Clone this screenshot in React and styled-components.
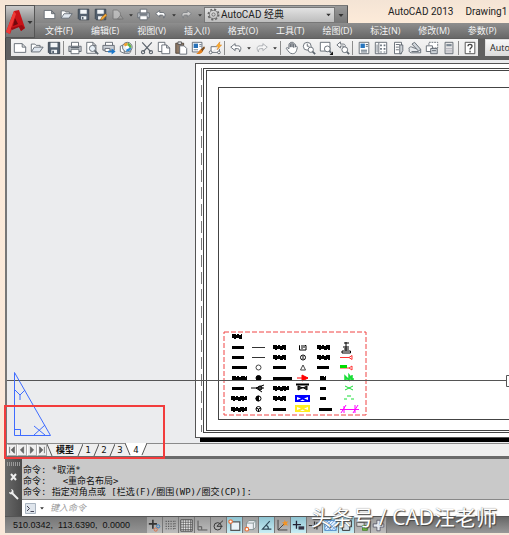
import React, { useState } from "react";
import styled, { createGlobalStyle, css } from "styled-components";

const ui = `"Open Sans", "Noto Sans CJK SC", sans-serif`;
const mono = `"DejaVu Sans Mono", "Noto Sans CJK SC", monospace`;

const GlobalStyle = createGlobalStyle`
  * {
    box-sizing: border-box;
  }
  body {
    margin: 0;
    background: #fbeadb;
    font-family: ${ui};
    overflow: hidden;
  }
  button, select, input {
    margin: 0;
    padding: 0;
    border: 0;
    background: none;
    font: inherit;
    color: inherit;
    border-radius: 0;
  }
`;

const Window = styled.div`
  position: relative;
  display: flex;
  flex-direction: column;
  padding: 5px 0 2px 5px;
  background: linear-gradient(#f4e4d5, #fdebd9 24px, #f9e8da);
`;

const Header = styled.header`
  display: flex;
`;

const AppButton = styled.button`
  flex: none;
  width: 30px;
  border: 1px solid #555;
  background: linear-gradient(#c9c9c9, #8b8b8b 50%, #777);
  display: flex;
  align-items: center;
`;

const HeaderRows = styled.div`
  flex: 1;
  min-width: 0;
`;

const TitleRow = styled.div`
  height: 18px;
  display: flex;
  align-items: center;
`;

const QuickAccess = styled.div`
  flex: none;
  height: 18px;
  display: flex;
  align-items: center;
  padding-left: 6px;
  background: linear-gradient(#a5a5a5, #858585);
  border-top: 1px solid #777;
`;

const IconButton = styled.button`
  flex: none;
  width: ${(props) => (props.$narrow ? "9px" : "17px")};
  height: 17px;
  display: flex;
  align-items: center;
  justify-content: center;
  opacity: ${(props) => (props.$dim ? 0.5 : 1)};
`;

const Workspace = styled.label`
  display: flex;
  align-items: center;
  gap: 1px;
  width: 131px;
  height: 16px;
  padding: 0 2px;
  color: #222;
  font-family: Roboto, "Noto Sans CJK SC", sans-serif;
  font-size: 10px;
  border: 1px solid #777;
  background: linear-gradient(#e2e2e2, #bdbdbd);

  select {
    flex: 1;
    appearance: none;
    height: 14px;
    line-height: 14px;
    outline: none;
  }
`;

const MoreButton = styled.button`
  width: 13px;
  height: 17px;
  display: flex;
  align-items: center;
  justify-content: center;
  background: linear-gradient(#999, #777);
  border-right: 1px solid #555;
`;

const WindowTitle = styled.h1`
  margin: 0;
  padding: 0 0 4px 40px;
  display: flex;
  gap: 12px;
  font-family: Roboto, sans-serif;
  font-size: 10px;
  font-weight: 400;
  line-height: 14px;
  color: #222;
  white-space: nowrap;
`;

const MenuBar = styled.nav`
  height: 15px;
  display: flex;
  align-items: center;
  gap: 18px;
  padding-left: 10px;
  background: linear-gradient(#8e8e8e, #686868);
  overflow: hidden;

  button {
    flex: none;
    color: #f5f5f5;
    font-size: 9px;
    line-height: 15px;
    white-space: nowrap;
  }
`;

const ToolbarRow = styled.div`
  height: 22px;
  display: flex;
  align-items: flex-start;
  gap: 7px;
  padding: 1px 0 4px 5px;
  background: #606060;
  border-left: 1px solid #444;
`;

const Toolbar = styled.div`
  flex: none;
  display: flex;
  align-items: center;
  height: 17px;
  background: linear-gradient(#f4f4f4, #e8e8e8);
`;

const Divider = styled.span`
  width: 1px;
  height: 14px;
  margin: 0 2px 0 1px;
  background: #8c8c8c;
`;

const StyleBox = styled.button`
  flex: 1;
  height: 17px;
  padding-left: 4px;
  text-align: left;
  font-size: 9px;
  line-height: 15px;
  color: #222;
  border: 1px solid #ddd;
  border-right: 0;
  background: linear-gradient(#f8f8f8, #ddd);
`;

const Workarea = styled.main`
  position: relative;
  border-left: 2px solid #777;
  background: #ebecee;
`;

const Drawing = styled.svg`
  display: block;
  width: 100%;
  height: 383px;
`;

const TabRow = styled.div`
  height: 16px;
  display: flex;
  align-items: stretch;
  background: #efefef;
  border-top: 1px solid #8a8a8a;
  border-bottom: 3px solid #6b6b6b;
`;

const TabNav = styled.button`
  width: 10px;
  border: 1px solid #aaa;
  border-left-color: #fff;
  display: flex;
  align-items: center;
  justify-content: center;
`;

const Tab = styled.button`
  width: ${(props) => (props.$wide ? "24px" : "10px")};
  font-family: ${mono};
  font-size: 9px;
  font-weight: ${(props) => (props.$wide ? 600 : 400)};
  line-height: 12px;
  color: #111;
  white-space: nowrap;
  ${(props) =>
    props.$active &&
    css`
      background: #fff;
      margin-top: -1px;
      padding-top: 1px;
    `}
`;

const RedFrame = styled.div`
  position: absolute;
  left: -3px;
  bottom: 0;
  width: 161px;
  height: 54px;
  border: 2px solid #f23c3c;
  pointer-events: none;
`;

const CommandPanel = styled.section`
  display: flex;
`;

const CommandGrip = styled.div`
  flex: none;
  width: 17px;
  display: flex;
  flex-direction: column;
  align-items: center;
  gap: 5px;
  padding-top: 3px;
  background: linear-gradient(90deg, #686868, #4b4b4b);
`;

const GripDots = styled.span`
  width: 13px;
  height: 4px;
  background: repeating-linear-gradient(90deg, #999 0 1px, transparent 1px 2px);
`;

const GripButton = styled.button`
  width: 13px;
  height: 12px;
  display: flex;
`;

const CommandBody = styled.div`
  flex: 1;
  min-width: 0;
`;

const History = styled.div`
  height: 40px;
  padding: 6px 1px 0;
  overflow: hidden;
  font-family: ${mono};
  font-size: 9px;
  line-height: 11px;
  color: #111;
  white-space: pre;
  background: #c9c9c9;
`;

const CommandLine = styled.label`
  display: flex;
  align-items: center;
  gap: 3px;
  height: 17px;
  padding-left: 3px;
  background: #fff;
  border-top: 1px solid #888;

  input {
    flex: 1;
    min-width: 0;
    outline: none;
    padding-left: 2px;
    font-family: ${mono};
    font-size: 9px;
    font-style: italic;
  }
  input::placeholder {
    color: #999;
    opacity: 1;
  }
`;

const StatusBar = styled.footer`
  display: flex;
  height: 17px;
  background: linear-gradient(#666, #999);
  border-top: 1px solid #555;
`;

const Coordinates = styled.output`
  width: 142px;
  padding-left: 8px;
  font-family: "Liberation Sans", sans-serif;
  font-size: 9px;
  line-height: 16px;
  color: #111;
  white-space: pre;
  background: linear-gradient(#777, #949494);
`;

const StatusButton = styled.button`
  width: 16px;
  display: flex;
  align-items: center;
  justify-content: center;
  border-right: 1px solid #777;
  background: ${(props) =>
    props.$on
      ? "linear-gradient(#8fc3d1, #c9eef5)"
      : "linear-gradient(#9b9b9b, #bcbcbc)"};
`;

const Watermark = styled.div`
  position: absolute;
  right: 12px;
  bottom: 4px;
  font-size: 21px;
  line-height: 28px;
  color: #fff;
  white-space: nowrap;
  text-shadow: 1px 1px 1px #444, 0 0 1px #777;
  pointer-events: none;
`;

const dark = "#5c646d";

const undoPath = "M2 7 L7 3 V5.5 H10 C14 5.5 14.5 9 12 12.5 C12.3 9.5 11 8.7 9.5 8.7 H7 V11 Z";

const glyphs = {
  new: <path d="M1.5 3 H10.5 L14.5 7 V13 H1.5 Z M10.5 3 V7 H14.5" fill="#fff" stroke={dark} />,
  open: (
    <g stroke={dark}>
      <path d="M1.5 12 V3.5 H5.5 L7 5 H11.5 V7" fill="#fff" />
      <path d="M1.5 12.5 L5 7 H15 L11 12.5 Z" fill="#dfe6ee" />
    </g>
  ),
  save: (
    <g>
      <path d="M1.5 1.5 H14.5 V14.5 H3 L1.5 13 Z" fill="#53606f" stroke="#39424e" />
      <path d="M4 2 H12 V7 H4 Z M5 10 H11.5 V14 H5 Z" fill="#f2f5f8" />
      <path d="M6 11 H8 V14 H6 Z" fill="#53606f" />
    </g>
  ),
  saveas: (
    <g>
      <path d="M1.5 1.5 H14.5 V14.5 H3 L1.5 13 Z" fill="#53606f" stroke="#39424e" />
      <path d="M4 2 H12 V7 H4 Z M5 10 H11.5 V14 H5 Z" fill="#f2f5f8" />
      <path d="M8 15 L9 12 L14 7 L16 9 L11 14 Z" fill="#f3a836" stroke="#8a5312" strokeWidth=".7" />
    </g>
  ),
  sheet: (
    <g>
      <path d="M2.5 2.5 H8 L11.5 6 V13.5 H2.5 Z" fill="#ddd" stroke="#555" />
      <path d="M8 13.5 L12 9 L15 13.5 Z" fill="#aaa" stroke="#555" />
    </g>
  ),
  print: (
    <g stroke={dark}>
      <path d="M4 6 V1.5 H12 V6" fill="#fff" />
      <path d="M1 6 H15 V12 H1 Z" fill="#c9ced4" />
      <path d="M3.5 9.5 H12.5 V14.5 H3.5 Z" fill="#fff" />
      <path d="M3 7.5 H13" strokeWidth="1.6" />
    </g>
  ),
  undo: <path d={undoPath} fill="#fff" stroke={dark} />,
  redo: (
    <g transform="translate(16 0) scale(-1 1)">
      <path d={undoPath} fill="#fff" stroke={dark} />
    </g>
  ),
  caret: <path d="M3 6 H13 L8 12 Z" fill="#333" />,
  preview: (
    <g stroke={dark} fill="#fff">
      <path d="M2 1.5 H9 L12.5 5 V14 H2 Z M9 1.5 V5 H12.5" />
      <circle cx="8.5" cy="8.5" r="3.5" fill="#e8f0f7" />
      <path d="M11 11 L15 15" strokeWidth="2" />
    </g>
  ),
  publish: (
    <g stroke={dark}>
      <path d="M4 5 V1.5 H12 V5" fill="#fff" />
      <path d="M1 5 H14 V10.5 H1 Z" fill="#c9ced4" />
      <path d="M3.5 8.5 H9 V12 H3.5 Z" fill="#fff" />
      <path d="M7 11 H11 V8.5 L15.5 12 L11 15.5 V13 H7 Z" fill="#1c77c9" stroke="none" />
    </g>
  ),
  dwf: (
    <g>
      <path d="M1.5 6 L6 4 V14 L1.5 12 Z M6 14 L12 14 L14 11" fill="#fff" stroke={dark} />
      <circle cx="9.5" cy="7" r="5.5" fill="#e9eef2" stroke={dark} />
      <path d="M9.5 7 L5 4.5 A5 5 0 0 1 10 2 Z" fill="#f0a030" />
      <path d="M9.5 7 L10 2 A5 5 0 0 1 14 8 Z" fill="#62b442" />
      <path d="M9.5 7 L14 8 A5 5 0 0 1 8 12 Z" fill="#2e8cd6" />
      <circle cx="9.5" cy="7" r="2" fill="#fff" />
    </g>
  ),
  cut: (
    <g stroke={dark} fill="none" strokeWidth="1.3">
      <path d="M2.5 1.5 L12 12 M13.5 1.5 L4 12" />
      <circle cx="3.5" cy="12.8" r="1.8" />
      <circle cx="12.5" cy="12.8" r="1.8" />
    </g>
  ),
  copy: (
    <g fill="#fff" stroke={dark}>
      <path d="M1.5 1.5 H9 V12 H1.5 Z" />
      <path d="M5.5 4.5 H11 L14.5 8 V14.5 H5.5 Z M11 4.5 V8 H14.5" />
    </g>
  ),
  paste: (
    <g>
      <path d="M2 2.5 H11 V14 H2 Z" fill="#8d7864" stroke="#4e4338" />
      <path d="M4.5 1 H8.5 V4 H4.5 Z" fill="#ddd" stroke="#555" />
      <path d="M6.5 5.5 H11.5 L14.5 8.5 V15 H6.5 Z" fill="#fff" stroke={dark} />
    </g>
  ),
  match: (
    <g>
      <path d="M1.5 1.5 H12.5 V12.5 H1.5 Z" fill="#fff" stroke={dark} />
      <path d="M3 3 H8 V8 H3 Z" fill="#2872b8" />
      <path d="M9.5 4 H12 M9.5 6 H12 M3 10 H8" stroke="#678" />
      <path d="M15 6 L11 10 L13 12 L16 8 Z" fill="#7d4c1c" />
      <path d="M11 9.5 L13.5 12 C11 15.5 8 15 6 14.5 C9 13.5 9 11 11 9.5 Z" fill="#e5811d" />
    </g>
  ),
  block: (
    <g stroke={dark} fill="#fff">
      <path d="M3.5 13 V6.5 H10 M3.5 13 H13 V9" />
      <circle cx="3" cy="13" r="1.6" />
      <circle cx="12.5" cy="13" r="1.6" />
      <path d="M13.5 1 L9.5 6 H12 L10.5 10 L15.5 4.5 H13 Z" fill="#ffb52d" stroke="#d87812" strokeWidth=".6" />
    </g>
  ),
  pan: (
    <path
      d="M4.5 9 V4 C4.5 2.5 6 2.5 6 4 V7 V2.5 C6 1 8 1 8 2.5 V7 V2.5 C8 1 10 1 10 3 V7.5 V4 C10 3 12 3 12 4.5 V7 C12.5 5.5 14.5 6 14 7.5 C13 13 11.5 14.5 8.5 14.5 C5.5 14.5 4 12 1.5 8.5 C1.5 7.2 3 7.2 4.5 9 Z"
      fill="#fff"
      stroke={dark}
    />
  ),
  zoomrt: (
    <g stroke={dark} fill="#fff">
      <circle cx="6" cy="6" r="4.5" />
      <path d="M6 3 V6 H8.5" fill="none" />
      <circle cx="10" cy="10" r="3" />
      <path d="M12 12 L15 15" strokeWidth="2" />
    </g>
  ),
  zoomwin: (
    <g stroke={dark} fill="#fff">
      <path d="M1.5 1.5 H12.5 V11.5 H1.5 Z" />
      <circle cx="9.5" cy="9" r="3.3" />
      <path d="M12 11.5 L14 13.5" strokeWidth="2" />
      <path d="M16 12 V16 H12 Z" fill="#111" stroke="none" />
    </g>
  ),
  zoomprev: (
    <g stroke={dark} fill="#fff">
      <path d="M1 4.5 L5 1 V3.5 H8 C11 3.5 11 6 10 7 C9 5.5 7 5.7 5 5.7 V8 Z" />
      <circle cx="10" cy="10" r="3.3" />
      <path d="M12.5 12.5 L15 15" strokeWidth="2" />
    </g>
  ),
  props: (
    <g>
      <path d="M2.5 1.5 H13.5 V14.5 H2.5 Z" fill="#fff" stroke={dark} />
      <path d="M4 3 H9 V8 H4 Z" fill="#2775be" />
      <path d="M10 4 H12.5 M10 6 H12.5 M4.5 10.5 H11.5 M4.5 12.5 H11.5" stroke="#456" />
    </g>
  ),
  center: (
    <g>
      <path d="M1.5 1.5 H14.5 V14.5 H1.5 Z" fill="#fff" stroke={dark} />
      <path d="M5.5 2 V14" stroke={dark} />
      <path d="M7 4 H9 V6 H7 Z M11 4 H13 V6 H11 Z M7 8 H9 V10 H7 Z M11 8 H13 V10 H11 Z M7 12 H9 V13 H7 Z M11 12 H13 V13 H11 Z M3 4 H4 V13 H3 Z" fill="#68737e" />
    </g>
  ),
  palette: (
    <g stroke={dark}>
      <path d="M4 1.5 H12 V14.5 H4 Z" fill="#fff" />
      <path d="M10 4.5 H13.5 V11 L11.5 14.5 H10 Z" fill="#cdd2d7" />
      <path d="M5.5 4 H10 M5.5 7 H9 M5.5 10 H9" />
    </g>
  ),
  markup: (
    <g stroke={dark}>
      <path d="M1.5 10 C0 7.5 3 6 4.5 7 L7 8 L14.5 10 V13.5 H4 C1.5 13.5 1 11.5 1.5 10 Z" fill="#e7eaed" />
      <path d="M4.5 3.5 L7.5 1.5 L14.5 9.5 L12 11.5 Z" fill="#cfd5da" />
      <path d="M4 12 H12" fill="none" />
    </g>
  ),
  sheetset: (
    <g stroke={dark} fill="#fff">
      <path d="M4.5 1.5 H14.5 V8 H4.5 Z" strokeDasharray="2 1" />
      <path d="M1.5 5.5 H8.5 V12 H1.5 Z" />
      <path d="M6.5 8.5 H14 V14.5 H6.5 Z" fill="#cfd5da" />
      <path d="M8 11 H12.5" />
    </g>
  ),
  calc: (
    <g>
      <path d="M3.5 1.5 H12.5 V14.5 H3.5 Z" fill="#e8e8e8" stroke={dark} />
      <path d="M5 3.5 H11 V6 H5 Z" fill="#7c8894" />
      <path d="M5 8.5 H11 M5 10.5 H11 M5 12.5 H11" stroke="#889" strokeDasharray="1.4 .9" />
    </g>
  ),
  help: (
    <g>
      <path d="M2.5 1.5 H13.5 V14.5 H2.5 Z" fill="#fff" stroke="#444" />
      <path d="M5.7 6 C5.7 3.2 10.5 3.2 10.3 6 C10.2 7.6 8 7.8 8 9.7 M8 11.2 V13" fill="none" stroke="#444" strokeWidth="1.5" />
    </g>
  ),
  gear: (
    <g fill="none" stroke="#666">
      <circle cx="8" cy="8" r="6.4" strokeWidth="2" strokeDasharray="2.6 2.42" />
      <circle cx="8" cy="8" r="5" />
      <circle cx="8" cy="8" r="2" />
    </g>
  ),
  infer: (
    <g fill="none" stroke="#333">
      <path d="M1 6 H11 M6 1 V12" strokeWidth="2" />
      <circle cx="12.5" cy="9" r="2" stroke="#2378c4" />
      <circle cx="9.5" cy="13" r="2" stroke="#e0693b" />
    </g>
  ),
  snap: <path d="M2 3 H12 M2 6 H12 M2 9 H12 M2 12 H14 M13.5 2 V13" stroke="#555" strokeWidth="1.4" strokeDasharray="1.4 1.6" />,
  grid: (
    <g>
      <path d="M1 1 H15 V15 H1 Z" fill="#eee" stroke="#333" />
      <path d="M4 1 V15 M7 1 V15 M10 1 V15 M13 1 V15 M1 4 H15 M1 7 H15 M1 10 H15 M1 13 H15" stroke="#444" strokeWidth=".8" />
    </g>
  ),
  ortho: <path d="M2.5 2 V13.5 H14 M3 9.5 H7 V13" fill="none" stroke="#555" strokeWidth="1.2" />,
  polar: (
    <g fill="none" stroke="#333" strokeWidth="1.2">
      <circle cx="7" cy="9" r="4.5" />
      <path d="M13.5 2 L6 9 H13" />
    </g>
  ),
  osnap: (
    <g>
      <path d="M3.5 3.5 H14.5 V14 H3.5 Z" fill="#eaf3f7" stroke="#555" strokeWidth="1.4" />
      <circle cx="3.2" cy="3.2" r="2.2" fill="#fff" stroke="#ea7136" strokeWidth="1.4" />
    </g>
  ),
  osnap3d: (
    <g>
      <path d="M3 5 L6 2 H14.5 V10 L11.5 13 H3 Z M3 5 H11.5 V13 M11.5 5 L14.5 2" fill="#eef1f5" stroke="#788" />
      <circle cx="3.5" cy="12.5" r="2.2" fill="#fff" stroke="#ea7136" strokeWidth="1.4" />
    </g>
  ),
  track: <path d="M12 2.5 L3 12.5 H14 M8 8 C10 9 10.5 11 10 12.5" fill="none" stroke="#2e4756" strokeWidth="1.4" />,
  ducs: (
    <g>
      <path d="M2.5 1 V13.5 H14 M2.5 13.5 L10 6" fill="none" stroke="#444" strokeWidth="1.2" />
      <path d="M10.5 1 L12 3.5 L15 3 L13 5.5 L15 8 L11.5 7.5 L9 9 L9.5 6 L7.5 4 L10 4 Z" fill="#f39324" />
    </g>
  ),
  dyn: (
    <g>
      <path d="M1 7 H11 M5.5 2 V12" stroke="#223" strokeWidth="1.6" />
      <path d="M8 9 H15 V13 H8 Z" fill="#334" />
    </g>
  ),
  lwt: <path d="M1 8 H8 M8 8 H15 M8 3 V13 M11 4 V14" stroke="#333" strokeWidth="1.5" strokeDasharray="4 1" />,
  trans: (
    <g>
      <path d="M1 2 H15 V14 H1 Z" fill="#eaf4ff" stroke="#397ac2" />
      <path d="M1 6 L5 2 M1 10 L9 2 M1 14 L13 2 M5 14 L15 4 M9 14 L15 8 M3 2 L15 14 M1 6 L9 14" stroke="#4b8dd4" strokeWidth=".9" />
    </g>
  ),
  quick: <path d="M3 5 H8 L12 8 V14 H3 Z M6 2 H14 V10" fill="#d7e2e8" stroke="#333" strokeWidth="1.2" />,
  cycle: (
    <g>
      <path d="M1 4 H10 V9 H1 Z" fill="#ddd" stroke="#555" />
      <path d="M8 8 H14 V14 H8 Z" fill="#6dbb3e" stroke="#4a7f2d" />
    </g>
  ),
  monitor: <path d="M6 1.5 H10 V6 H14.5 V10 H10 V14.5 H6 V10 H1.5 V6 H6 Z" fill="#e6eaf0" stroke="#556" />,
};

const Icon = ({ name, size = 14 }) => (
  <svg width={size} height={size} viewBox="0 0 16 16" fill="none" aria-hidden="true">
    {glyphs[name]}
  </svg>
);

const quickItems = ["new", "open", "save", "saveas", "sheet", "caret", "print", "undo", "caret", "redo", "caret"];

const menus = ["文件(F)", "编辑(E)", "视图(V)", "插入(I)", "格式(O)", "工具(T)", "绘图(D)", "标注(N)", "修改(M)", "参数(P)"];

const toolGroups = [
  ["new", "open", "save"],
  ["print", "preview", "publish", "dwf"],
  ["cut", "copy", "paste", "match", "block"],
  ["undo", "caret", "redo", "caret"],
  ["pan", "zoomrt", "zoomwin", "zoomprev"],
  ["props", "center", "palette", "markup", "sheetset", "calc"],
  ["help"],
];

const statusItems = [
  ["infer"],
  ["snap"],
  ["grid"],
  ["ortho"],
  ["polar"],
  ["osnap", true],
  ["osnap3d"],
  ["track", true],
  ["ducs"],
  ["dyn", true],
  ["lwt"],
  ["trans", true],
  ["quick", true],
  ["cycle"],
  ["monitor"],
];

const navItems = [
  ["第一个", "M2 1 V9 M8 1 L4 5 L8 9 Z"],
  ["上一个", "M7 1 L3 5 L7 9 Z"],
  ["下一个", "M3 1 L7 5 L3 9 Z"],
  ["最后一个", "M2 1 L6 5 L2 9 Z M8 1 V9"],
];

// legend labels: x, y, width, rough outline or solid bar
const labels = [
  [232, 336, 10, true],
  [232, 347, 12], [232, 357, 12], [232, 367, 15], [232, 378, 15, true], [232, 388, 12], [231, 398, 16, true], [231, 409, 16, true],
  [273, 347, 13, true], [273, 357, 13, true], [273, 367, 13], [273, 378, 19], [273, 388, 16, true], [273, 398, 13, true], [273, 409, 13],
  [317, 347, 13, true], [317, 357, 13, true], [317, 367, 12], [320, 378, 6, true], [320, 388, 6], [320, 398, 6], [319, 409, 13],
];

const Label = ({ x, y, w, rough }) => (
  <g stroke="#000">
    <path d={`M${x} ${y + 0.5} h${w}`} strokeWidth="3" />
    {rough && <path d={`M${x} ${y} h${w}`} strokeWidth="4" strokeDasharray="4 1 2 2" />}
    {rough && <path d={`M${x + 2} ${y + 1} h${w - 2}`} strokeWidth="4" strokeDasharray="2 3 3 1" />}
  </g>
);

const Legend = () => (
  <g fill="none" stroke="#000">
    <rect x="224" y="332" width="142" height="83" stroke="#f04444" strokeDasharray="5 2" />
    {labels.map(([x, y, w, rough]) => (
      <Label key={`${x}-${y}`} x={x} y={y} w={w} rough={rough} />
    ))}
    <path d="M252 347.5 H265 M252 357.5 H265" stroke="#333" />
    <circle cx="258.5" cy="367.5" r="2.5" stroke="#444" />
    <circle cx="258.5" cy="378" r="2.5" fill="#000" />
    <path d="M251 388 H264 M256 388 L264 385 M256 388 L262 392" />
    <circle cx="260" cy="388" r="2" fill="#444" />
    <circle cx="258.5" cy="398.5" r="2.5" />
    <path d="M258.5 396 A2.5 2.5 0 0 0 258.5 401 Z" fill="#000" />
    <circle cx="258.5" cy="409" r="2.5" />
    <path d="M256 408 L258.5 409 L261 408 M258.5 409 V412" />
    <path d="M300 345.5 H299.5 V350 H306 V345.5 H305 M302 345 V349 M304 345 V348" />
    <circle cx="303" cy="357.5" r="2.5" />
    <path d="M303 356 V359" />
    <path d="M303 365 L305.5 370 H300.5 Z" stroke="#444" />
    <path d="M297 378 H308" stroke="#f00" />
    <path d="M302 375 L308 378 L302 381 Z" fill="#f00" stroke="#f00" />
    <path d="M296 384.5 H309" strokeWidth="2" />
    <path d="M298 386 V390 L303 387.5 L307 390 V386 L303 388 Z" fill="#333" />
    <path d="M295 395 H310 V402 H295 Z" fill="#00f" stroke="none" />
    <path d="M297 397 L301 398.5 L297 400 Z M308 397 L304 398.5 L308 400 Z M300 401 H305 L302.5 399.5 Z" fill="#fff" stroke="none" />
    <path d="M295 405 H310 V412 H295 Z" fill="#fe2" stroke="none" />
    <path d="M297 407 L301 408.5 L297 410 Z M308 407 L304 408.5 L308 410 Z M300 411 H305 L302.5 409.5 Z" fill="#fff" stroke="none" />
    <path d="M344 343 H349 M346 342 V351 M343 347 H349 M342 351 V353 H350.5 V351 Z M344 349 H349" />
    <path d="M340 357.5 H349 M352 355.5 L349 357.5 L352 359.5 Z M340 368 H349 M352 366 L349 368 L352 370 Z" stroke="#f33" />
    <path d="M340 366.5 H347" stroke="#0d0" strokeWidth="3" />
    <path d="M345 380 V376 L349 380 V375 L353 380 M352 375 V380 M345 379 H354" stroke="#19dd36" strokeWidth="1.5" />
    <path d="M345 386 L349 388 L353 386 M345 390 L349 388 L353 390" stroke="#19dd36" />
    <path d="M344 399 H347 M351 399 H354 M347 396 H351" stroke="#19dd36" />
    <path d="M340 409.5 H359 M341 413 L346 405 M344 406 V413 M353 413 L358 405 M355 405 V413" stroke="#f0f" />
  </g>
);

const Model = () => (
  <Drawing aria-label="图纸">
    <g transform="translate(-7 -60)" shapeRendering="crispEdges">
      <path d="M200 438 H4000 V442 H200 Z" fill="#000" />
      <path d="M195.5 437.5 V63.5 H4000 V437.5 Z" fill="#fff" stroke="#555" />
      <path d="M201.5 68 V432" stroke="#777" strokeDasharray="12 5" />
      <path d="M4000 68.5 H203.5 V432.5 H4000 M4000 70.5 H206.5 V430.5 H4000" fill="none" stroke="#444" />
      <path d="M4000 87.5 H218.5 V419.5 H4000" fill="none" stroke="#444" />
    </g>
    <g transform="translate(-7 -60)">
      <Legend />
      <path d="M7 380.5 H506 M506.5 375.5 H516.5 V386.5 H506.5 Z" fill="none" stroke="#555" />
      <g fill="none" stroke="#3f6cff">
        <path d="M14.5 372.5 V435.5 H50.5 Z M14.5 429.5 H20.5 V435.5" />
        <path d="M15 390 L20 395 L25 390 M20 395 V400 M34 426 L45 435 M45 425 L34 435" />
      </g>
    </g>
  </Drawing>
);

const EdgeShape = styled.svg`
  flex: none;
  margin-top: ${(props) => (props.$raised ? "-1px" : "0")};
`;

const TabEdge = ({ back, white }) => (
  <EdgeShape width="6" height="13" viewBox="0 0 6 13" $raised={white}>
    {white && <path d={back ? "M0 0 H6 V12 H5 Z" : "M0 0 H6 L1 12 H0 Z"} fill="#fff" />}
    <path d={back ? "M0 0 L5 12" : "M6 0 L1 12"} stroke="#555" />
  </EdgeShape>
);

const App = () => {
  const [active, setActive] = useState("4");
  const [command, setCommand] = useState("");
  const tabs = ["模型", "1", "2", "3", "4"];

  return (
    <>
      <GlobalStyle />
      <Window>
        <Header>
          <AppButton aria-label="AutoCAD">
            <svg width="20" height="26" viewBox="0 0 20 26">
              <path d="M8 2 L13 1 L19 19 L15 22 L13 18 L6 20 L4 25 L0 23 Z" fill="#c91318" />
              <path d="M8 2 L10 5 L5 19 L4 25 L0 23 Z" fill="#ef3b36" />
              <path d="M9 9 L12 15 L7 17 Z" fill="#6f090d" />
              <path d="M5 19 L16 16 L19 19 L15 22 L13 18 L6 21 Z" fill="#9c0c12" />
            </svg>
            <Icon name="caret" size={8} />
          </AppButton>
          <HeaderRows>
            <TitleRow>
              <QuickAccess>
                {quickItems.map((name, i) => (
                  <IconButton key={i} aria-label={name} $narrow={name === "caret"} $dim={name === "redo" || name === "sheet"}>
                    <Icon name={name} size={name === "caret" ? 6 : 13} />
                  </IconButton>
                ))}
                <Workspace>
                  <Icon name="gear" size={13} />
                  <select aria-label="工作空间" defaultValue="classic">
                    <option value="classic">AutoCAD 经典</option>
                  </select>
                  <Icon name="caret" size={7} />
                </Workspace>
                <MoreButton aria-label="更多">
                  <Icon name="caret" size={8} />
                </MoreButton>
              </QuickAccess>
              <WindowTitle>
                <span>AutoCAD 2013</span>
                <span>Drawing1</span>
              </WindowTitle>
            </TitleRow>
            <MenuBar>
              {menus.map((menu) => (
                <button key={menu}>{menu}</button>
              ))}
            </MenuBar>
          </HeaderRows>
        </Header>
        <ToolbarRow>
          <Toolbar>
            {toolGroups.map((group, g) => (
              <React.Fragment key={g}>
                {g > 0 && <Divider />}
                {group.map((name, i) => (
                  <IconButton key={i} aria-label={name} $narrow={name === "caret"} $dim={name === "redo"}>
                    <Icon name={name} size={name === "caret" ? 6 : 14} />
                  </IconButton>
                ))}
              </React.Fragment>
            ))}
          </Toolbar>
          <StyleBox>Auto</StyleBox>
        </ToolbarRow>
        <Workarea>
          <Model />
          <TabRow>
            {navItems.map(([label, d]) => (
              <TabNav key={label} aria-label={label}>
                <svg width="8" height="8" viewBox="0 0 10 10">
                  <path d={d} fill="#666" stroke="#666" />
                </svg>
              </TabNav>
            ))}
            <TabEdge back />
            {tabs.map((tab, i) => (
              <React.Fragment key={tab}>
                {i > 0 && <TabEdge back={tab === active} white={tab === active} />}
                <Tab $wide={i === 0} $active={tab === active} onClick={() => setActive(tab)}>
                  {tab}
                </Tab>
              </React.Fragment>
            ))}
            <TabEdge white={active === "4"} />
          </TabRow>
          <RedFrame />
        </Workarea>
        <CommandPanel>
          <CommandGrip>
            <GripDots />
            <GripButton aria-label="关闭">
              <svg width="13" height="12" viewBox="0 0 13 12">
                <path d="M4 3 L9 9 M9 3 L4 9" stroke="#eee" strokeWidth="2" />
              </svg>
            </GripButton>
            <GripButton aria-label="自定义">
              <svg width="13" height="12" viewBox="0 0 13 12">
                <path d="M5 5 L11 11" stroke="#eee" strokeWidth="2" />
                <path d="M2 4 C2 7 6 7 6.5 4.5 C7 2 5 1 4 1 L5 3 L3.5 4.5 Z" fill="#eee" />
              </svg>
            </GripButton>
          </CommandGrip>
          <CommandBody>
            <History>
              {"命令: *取消*\n命令:   <重命名布局>\n命令: 指定对角点或 [栏选(F)/圈围(WP)/圈交(CP)]:"}
            </History>
            <CommandLine>
              <svg width="11" height="11" viewBox="0 0 11 11">
                <path d="M.5 .5 H10.5 V10.5 H.5 Z" fill="#dfe5ec" stroke="#a9b4c0" />
                <path d="M2 3 L4.5 5.5 L2 8 M5.5 8.5 H9" fill="none" stroke="#445" />
              </svg>
              <Icon name="caret" size={6} />
              <input
                aria-label="命令"
                placeholder="键入命令"
                value={command}
                onChange={(e) => setCommand(e.target.value)}
              />
            </CommandLine>
          </CommandBody>
        </CommandPanel>
        <StatusBar>
          <Coordinates>510.0342,  113.6390,  0.0000</Coordinates>
          {statusItems.map(([name, on]) => (
            <StatusButton key={name} aria-label={name} $on={on}>
              <Icon name={name} size={13} />
            </StatusButton>
          ))}
        </StatusBar>
        <Watermark>头条号 / CAD汪老师</Watermark>
      </Window>
    </>
  );
};

export default App;
